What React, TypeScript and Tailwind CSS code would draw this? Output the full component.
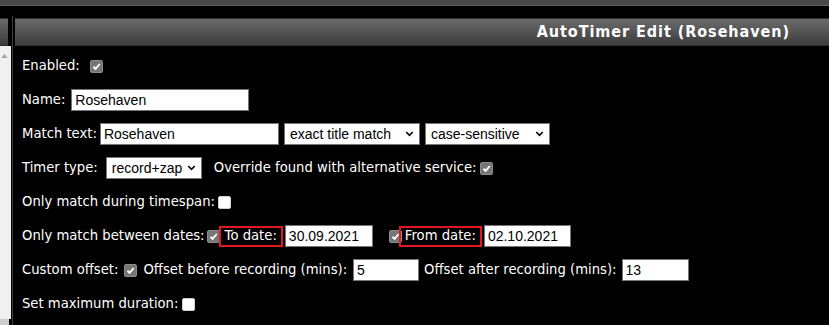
const label = "font-['DejaVu_Sans',Verdana,sans-serif] text-[13.2px] text-white whitespace-nowrap";
const field = "font-['Liberation_Sans',Arial,sans-serif] text-[14px] text-black";

const Check = ({ checked = false, className = '' }: { checked?: boolean; className?: string }) =>
  checked ? (
    <span
      className={`inline-flex h-[13px] w-[13px] shrink-0 items-center justify-center rounded-[2px] border border-[#8c8c8c] bg-[#767676] ${className}`}
    >
      <svg viewBox="0 0 10 10" className="h-[9px] w-[9px]">
        <path d="M1.6 5.3 L4 7.6 L8.6 2.2" stroke="white" strokeWidth="2" fill="none" />
      </svg>
    </span>
  ) : (
    <span className={`inline-block h-[13px] w-[13px] shrink-0 rounded-[2px] border border-[#cfcfcf] bg-white ${className}`} />
  );

const TextBox = ({ value, className = '' }: { value: string; className?: string }) => (
  <div
    className={`flex h-[22px] shrink-0 items-center border border-[#767676] bg-white pl-[3px] ${field} ${className}`}
  >
    {value}
  </div>
);

const Select = ({ value, className = '' }: { value: string; className?: string }) => (
  <div
    className={`flex h-[22px] shrink-0 items-center justify-between border border-[#767676] bg-white pl-[5px] pr-[5px] ${field} ${className}`}
  >
    <span>{value}</span>
    <svg viewBox="0 0 10 7" className="h-[6px] w-[9px]">
      <path d="M1.2 1.2 L5 5 L8.8 1.2" stroke="black" strokeWidth="1.9" fill="none" />
    </svg>
  </div>
);

const Row = ({ children }: { children: React.ReactNode }) => (
  <div className="flex h-[34px] items-center">{children}</div>
);

const RedLabel = ({ text, className = '' }: { text: string; className?: string }) => (
  <span className={`relative flex h-[21px] items-center border-2 border-[#e3171f] px-[4px] ${label} ${className}`}>{text}</span>
);

export default function App() {
  return (
    <div className="flex h-[325px] w-[829px] flex-col overflow-hidden bg-black">
      <div className="h-[6px] shrink-0 border-b border-[#5e5e5e] bg-[#484848]" />
      <div className="flex min-h-0 flex-1 pt-[10px]">
        {/* left sidebar sliver */}
        <div className="flex w-[11px] shrink-0 flex-col pt-[2px]">
          <div className="h-[28px] w-[8px] border-y border-[#303030] bg-gradient-to-b from-[#6a6a6a] to-[#3c3c3c]" />
          <div className="flex-1 bg-[#f0f0f0] pl-[1px] pt-[8px]">
            <svg viewBox="0 0 8 5" className="h-[4px] w-[7px]">
              <path d="M0 5 L4 0 L8 5 Z" fill="#a3a3a3" />
            </svg>
          </div>
          <div className="h-[6px] w-[9px] bg-[#cdcdcd]" />
        </div>
        <div className="ml-[1px] w-[1px] shrink-0 bg-[#3e3e3e]" />

        <div className="ml-[2px] flex min-w-0 flex-1 flex-col pt-[2px]">
          <div className="flex h-[28px] shrink-0 items-center justify-end border-y border-[#303030] bg-gradient-to-b from-[#6b6b6b] to-[#3d3d3d] pr-[39px]">
            <span className="font-['DejaVu_Sans_Condensed','DejaVu_Sans',sans-serif] text-[16px] font-bold tracking-[0.95px] text-white">
              AutoTimer Edit (Rosehaven)
            </span>
          </div>

          <div className="flex flex-col pl-[7px] pt-[3px]">
            <Row>
              <span className={label}>Enabled:</span>
              <Check checked className="ml-[10px]" />
            </Row>
            <Row>
              <span className={label}>Name:</span>
              <TextBox value="Rosehaven" className="ml-[6px] w-[178px]" />
            </Row>
            <Row>
              <span className={label}>Match text:</span>
              <TextBox value="Rosehaven" className="ml-[3px] w-[179px]" />
              <Select value="exact title match" className="ml-[5px] w-[136px]" />
              <Select value="case-sensitive" className="ml-[5px] w-[125px]" />
            </Row>
            <Row>
              <span className={label}>Timer type:</span>
              <Select value="record+zap" className="ml-[8px] w-[96px]" />
              <span className={`${label} ml-[12px]`}>Override found with alternative service:</span>
              <Check checked className="ml-[3px]" />
            </Row>
            <Row>
              <span className={label}>Only match during timespan:</span>
              <Check className="ml-[3px]" />
            </Row>
            <Row>
              <span className={label}>Only match between dates:</span>
              <Check checked className="ml-[2px]" />
              <RedLabel text="To date:" className="-ml-[1px]" />
              <TextBox value="30.09.2021" className="ml-[2px] w-[88px]" />
              <Check checked className="ml-[16px]" />
              <RedLabel text="From date:" className="-ml-[3px]" />
              <TextBox value="02.10.2021" className="ml-[2px] w-[87px]" />
            </Row>
            <Row>
              <span className={label}>Custom offset:</span>
              <Check checked className="ml-[6px]" />
              <span className={`${label} ml-[6px]`}>Offset before recording (mins):</span>
              <TextBox value="5" className="ml-[6px] w-[66px]" />
              <span className={`${label} ml-[5px]`}>Offset after recording (mins):</span>
              <TextBox value="13" className="ml-[5px] w-[67px]" />
            </Row>
            <Row>
              <span className={label}>Set maximum duration:</span>
              <Check className="ml-[4px]" />
            </Row>
          </div>
        </div>
      </div>
    </div>
  );
}
